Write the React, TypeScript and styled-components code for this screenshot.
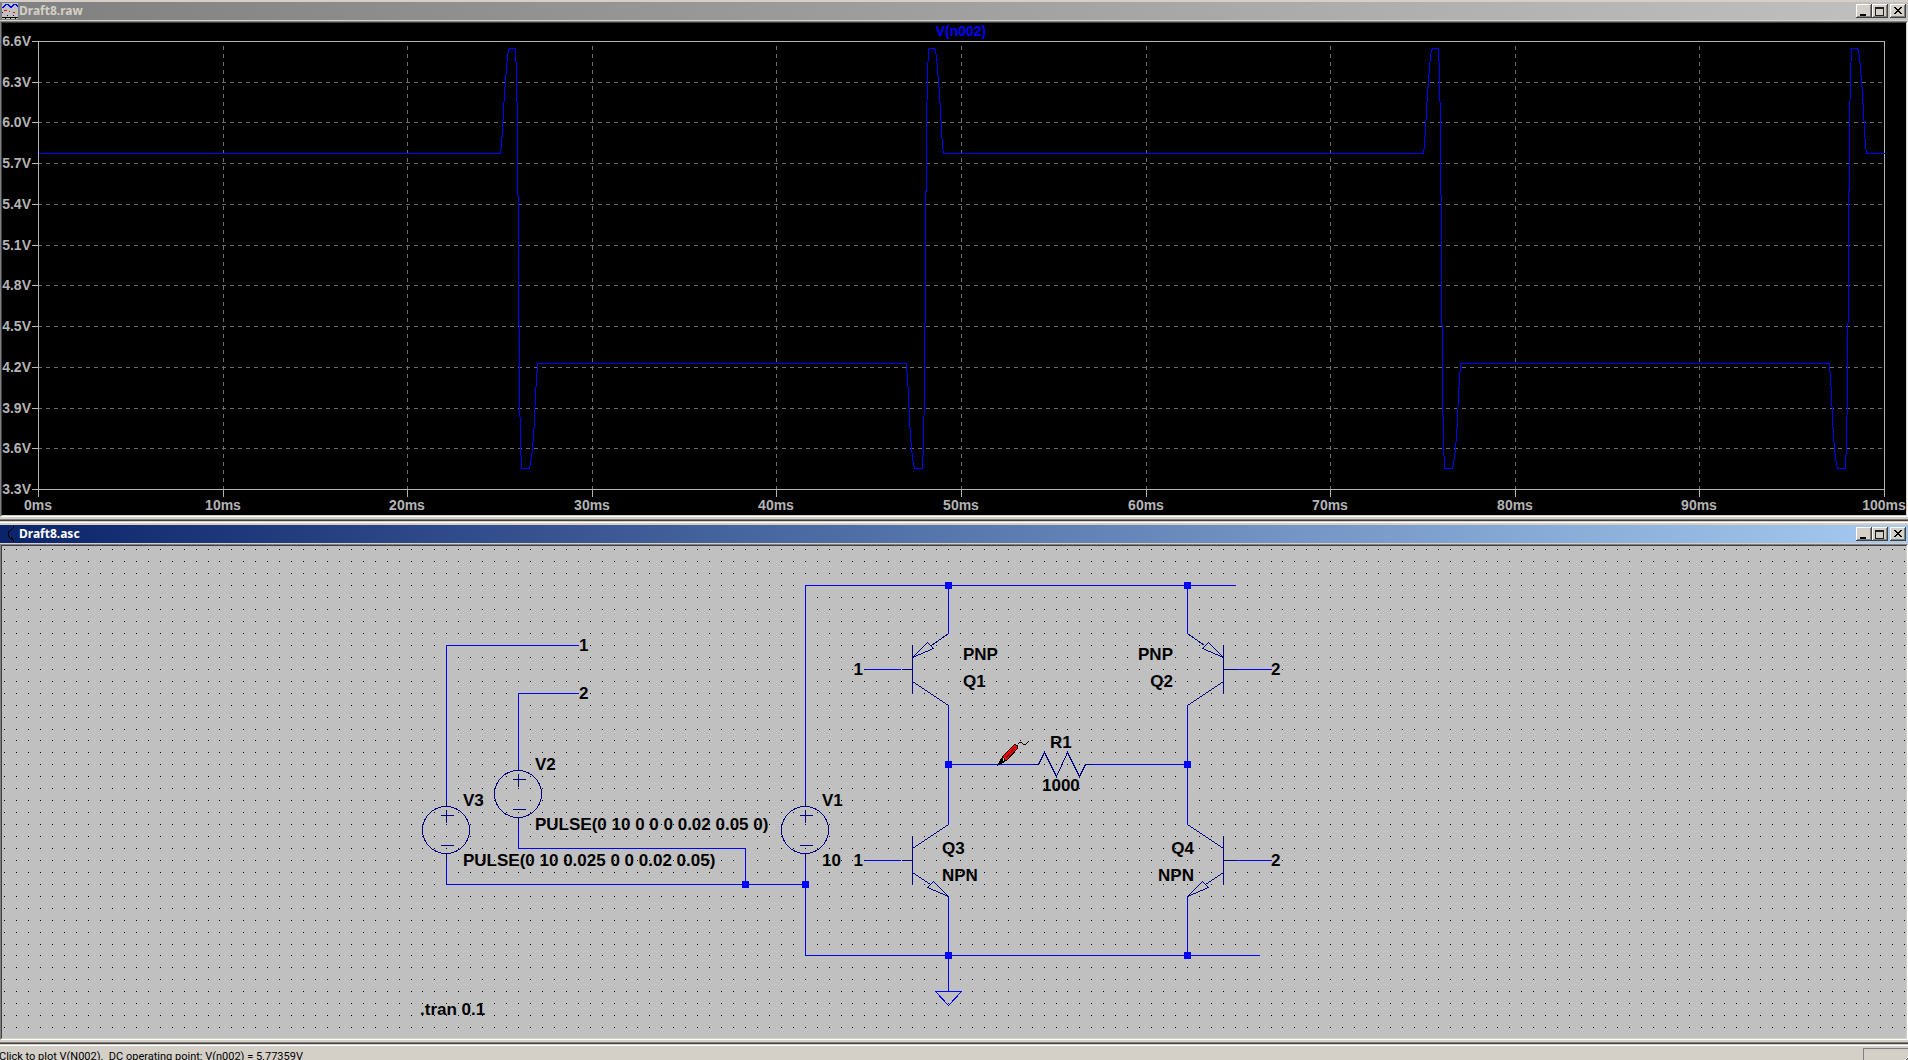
import React, { useLayoutEffect, useMemo, useRef, useState } from "react";
import styled, { createGlobalStyle } from "styled-components";

const face = "#d4d0c8";
const navy = "#000080";
const wireBlue = "#0000ff";
const uiFont = '"Noto Sans", "Open Sans", sans-serif';
const statusFont = 'Roboto, "Noto Sans", sans-serif';
const plotFont = '"Liberation Sans", Arial, sans-serif';

const GlobalStyle = createGlobalStyle`
  html, body { margin: 0; padding: 0; height: 100%; overflow: hidden; background: ${face}; }
  #root { height: 100%; }
  * { box-sizing: border-box; }
`;

const Workspace = styled.div`
  display: flex;
  flex-direction: column;
  height: 100vh;
  overflow: hidden;
  background: ${face};
`;

const Mdi = styled.main`
  display: flex;
  flex: 1;
  flex-direction: column;
  min-height: 0;
  margin-top: -2px;
`;

const Frame = styled.section`
  display: flex;
  flex: 1 1 0;
  flex-direction: column;
  min-height: 0;
  padding: 4px 0;
  background: ${face};
  box-shadow:
    inset 0 1px 0 ${face},
    inset 0 2px 0 #fff,
    inset 0 -1px 0 #404040,
    inset 0 -2px 0 #808080;
`;

const TitleBar = styled.header<{ $active: boolean }>`
  display: flex;
  flex: none;
  align-items: center;
  height: 18px;
  margin-bottom: 1px;
  padding: 0 2px;
  background: ${(p) =>
    p.$active
      ? "linear-gradient(to right, #0a246a, #a6caf0)"
      : "linear-gradient(to right, #808080, #c0c0c0)"};
  color: ${(p) => (p.$active ? "#fff" : face)};
`;

const Title = styled.h1`
  flex: 1;
  margin: 0;
  padding-left: 1px;
  font: bold 12px/18px ${uiFont};
`;

const CaptionButton = styled.button<{ $gap?: boolean }>`
  display: block;
  width: 16px;
  height: 14px;
  margin: 0 0 0 ${(p) => (p.$gap ? "2px" : "0")};
  padding: 0;
  border: 0;
  background: ${face};
  box-shadow:
    inset -1px -1px 0 #404040,
    inset 1px 1px 0 #fff,
    inset -2px -2px 0 #808080;

  svg {
    display: block;
  }
`;

const Client = styled.div<{ $color: string }>`
  flex: 1;
  min-height: 0;
  overflow: hidden;
  border: 1px solid;
  border-color: #808080 #fff #fff #808080;
  background: ${(p) => p.$color};

  > div {
    height: 100%;
    border: 1px solid;
    border-color: #404040 ${face} ${face} #404040;
  }
`;

const Drawing = styled.svg`
  display: block;
  width: 100%;
  height: 100%;
`;

const PlotText = styled.text<{ $trace?: boolean }>`
  fill: ${(p) => (p.$trace ? wireBlue : "#b4b4b4")};
  font: bold 14px ${plotFont};
`;

const SchematicText = styled.text`
  fill: #000;
  font: bold 17px ${plotFont};
`;

const StatusBar = styled.footer`
  display: flex;
  flex: none;
  justify-content: space-between;
  height: 16px;
  margin-left: -1px;
  overflow: hidden;
  background: ${face};
  box-shadow: inset 0 1px 0 ${face}, inset 0 2px 0 #fff;
`;

const StatusText = styled.p`
  margin: 0;
  padding-top: 6px;
  color: #000;
  font: 11px/14px ${statusFont};
  white-space: pre;
`;

const StatusCell = styled.div`
  width: 45px;
  height: 20px;
  margin-top: 4px;
  border-top: 1px solid #808080;
  border-left: 1px solid #808080;

  svg {
    display: block;
    margin-left: auto;
  }
`;

function useSize() {
  const ref = useRef<HTMLDivElement>(null);
  const [size, setSize] = useState({ width: 0, height: 0 });
  useLayoutEffect(() => {
    const el = ref.current;
    if (!el) return;
    const read = () => setSize({ width: el.clientWidth, height: el.clientHeight });
    read();
    const observer = new ResizeObserver(read);
    observer.observe(el);
    return () => observer.disconnect();
  }, []);
  return { ref, ...size };
}

function WaveformIcon() {
  return (
    <svg width="16" height="16" viewBox="0 0 16 16" shapeRendering="crispEdges" aria-hidden>
      <rect width="16" height="16" fill="#c0c0c0" />
      <path d="M0 4h1v-1h1v-1h1v-1h3v1h1v1h1v1h1v-1h1v-1h1v-1h3v1h1v1h1" fill="none" stroke="#0000ff" transform="translate(0 .5)" />
      <path d="M2 7.500h3M7 8.500h1M11 9.500h2" stroke="#ff0000" />
      <path d="M0 9.500h1M5 12.500h1M11 12.500h1" stroke={navy} />
      <path d="M0 14.500h16M3 15.500h1M8 15.500h1M13 15.500h1" stroke="#000" />
    </svg>
  );
}

function SchematicIcon() {
  return (
    <svg width="16" height="16" viewBox="0 0 16 16" shapeRendering="crispEdges" aria-hidden>
      <path d="M11.500 0v2M10.500 2v1M9.500 3v1M8.500 4v1M7.500 5v1M6.500 5v6M7.500 10v2M8.500 12v1M9.500 11v2M10.500 12v2M11.500 13v3" stroke="#000" />
    </svg>
  );
}

function CaptionButtons() {
  return (
    <>
      <CaptionButton aria-label="Minimize">
        <svg width="16" height="14" shapeRendering="crispEdges" aria-hidden>
          <rect x="4" y="10" width="6" height="2" />
        </svg>
      </CaptionButton>
      <CaptionButton aria-label="Maximize">
        <svg width="16" height="14" shapeRendering="crispEdges" aria-hidden>
          <path d="M3 3h9v9H3z M4 5v6h7V5z" fillRule="evenodd" fill="#202020" />
        </svg>
      </CaptionButton>
      <CaptionButton aria-label="Close" $gap>
        <svg width="16" height="14" shapeRendering="crispEdges" aria-hidden>
          <path d="M4 3h2v1h1v1h2v-1h1v-1h2v1h-1v1h-1v1h-1v1h1v1h1v1h1v1h-2v-1h-1v-1h-2v1h-1v1h-2v-1h1v-1h1v-1h1v-1h-1v-1h-1v-1h-1z" />
        </svg>
      </CaptionButton>
    </>
  );
}

function ChildWindow(props: {
  title: string;
  active: boolean;
  icon: React.ReactNode;
  color: string;
  children: React.ReactNode;
}) {
  return (
    <Frame aria-label={props.title}>
      <TitleBar $active={props.active}>
        {props.icon}
        <Title>{props.title}</Title>
        <CaptionButtons />
      </TitleBar>
      <Client $color={props.color}>{props.children}</Client>
    </Frame>
  );
}

/* Samples of V(n002) on a grid of 1846 x 448 steps: 100 ms wide, 6.6 V down to 3.3 V. */
const GRID_W = 1846;
const GRID_H = 448;

const risingEdge: [number, number][] = [
  [868, 322], [869, 339], [870, 352], [871, 379], [872, 394], [873, 407],
  [874, 416], [875, 422], [876, 427], [884, 427], [885, 401], [886, 349],
  [887, 218], [888, 86], [889, 34], [890, 7], [896, 7], [897, 9], [898, 15],
  [899, 27], [900, 39], [901, 52], [902, 70], [903, 88], [904, 104], [905, 112],
];
const fallingEdge = risingEdge
  .map(([x, y]): [number, number] => [1367 - x, y])
  .reverse();
const period = (shift: number) =>
  [...fallingEdge, ...risingEdge].map(([x, y]): [number, number] => [x + shift, y]);
const samples: [number, number][] = [[0, 112], ...period(0), ...period(923), [GRID_W, 112]];

const voltTicks = ["6.6V", "6.3V", "6.0V", "5.7V", "5.4V", "5.1V", "4.8V", "4.5V", "4.2V", "3.9V", "3.6V", "3.3V"];
const timeTicks = ["0ms", "10ms", "20ms", "30ms", "40ms", "50ms", "60ms", "70ms", "80ms", "90ms", "100ms"];

function WaveformPlot() {
  const { ref, width, height } = useSize();
  const left = 36;
  const top = 18;
  const right = width - 22;
  const bottom = height - 26;
  const w = right - left;
  const h = bottom - top;
  const tx = (i: number) => left + Math.round((i * w) / 10);
  const ty = (i: number) => top + Math.round((i * h) / 11);
  const trace = samples
    .map(([x, y]) => `${Math.round(left + (x * w) / GRID_W)},${Math.round(top + (y * h) / GRID_H)}`)
    .join(" ");

  return (
    <div ref={ref}>
      {width > 0 && (
        <Drawing role="img" aria-label="V(n002) against time">
          <g transform="translate(.5 .5)" shapeRendering="crispEdges" fill="none">
            <g stroke="#6e6e6e" strokeDasharray="4 4">
              {voltTicks.slice(1, -1).map((v, i) => (
                <line key={v} x1={left - 0.5} x2={right} y1={ty(i + 1)} y2={ty(i + 1)} />
              ))}
              {timeTicks.slice(1, -1).map((t, i) => (
                <line key={t} x1={tx(i + 1)} x2={tx(i + 1)} y1={top + 4.5} y2={bottom} />
              ))}
            </g>
            <g stroke="#b4b4b4">
              <rect x={left} y={top} width={w} height={h} />
              {voltTicks.map((v, i) => (
                <line key={v} x1={left - 7} x2={left} y1={ty(i)} y2={ty(i)} />
              ))}
              {timeTicks.map((t, i) => (
                <line key={t} x1={tx(i)} x2={tx(i)} y1={bottom} y2={bottom + 7} />
              ))}
            </g>
            <polyline points={trace} stroke={wireBlue} />
          </g>
          <PlotText $trace x={left + w / 2} y={top - 5} textAnchor="middle">V(n002)</PlotText>
          {voltTicks.map((v, i) => (
            <PlotText key={v} x={left - 7} y={ty(i) + 5} textAnchor="end">{v}</PlotText>
          ))}
          {timeTicks.map((t, i) => (
            <PlotText key={t} x={tx(i)} y={bottom + 21} textAnchor="middle">{t}</PlotText>
          ))}
        </Drawing>
      )}
    </div>
  );
}

/* Schematic grid: column and row numbers to pixels at the current zoom. */
const PITCH = 11.944;
const gx = (k: number) => Math.floor(14.9 + k * PITCH);
const gy = (k: number) => Math.floor(3.85 + k * PITCH);

type Run = [number, number][];

const wires: Run[] = [
  [[36, 21], [36, 8], [47, 8]],
  [[42, 18], [42, 12], [47, 12]],
  [[42, 23], [42, 25], [61, 25], [61, 28]],
  [[36, 26], [36, 28], [66, 28]],
  [[66, 21], [66, 3], [102, 3]],
  [[66, 26], [66, 34], [104, 34]],
  [[78, 3], [78, 7]],
  [[98, 3], [98, 7]],
  [[78, 13], [78, 23]],
  [[98, 13], [98, 23]],
  [[78, 29], [78, 37]],
  [[98, 29], [98, 34]],
  [[78, 18], [85, 18]],
  [[90, 18], [98, 18]],
  [[71, 10], [74, 10]],
  [[71, 26], [74, 26]],
  [[102, 10], [105, 10]],
  [[102, 26], [105, 26]],
];

const junctions: Run = [[78, 3], [98, 3], [78, 18], [98, 18], [61, 28], [66, 28], [78, 34], [98, 34]];

function Wire({ run }: { run: Run }) {
  return <polyline points={run.map(([x, y]) => `${gx(x)},${gy(y)}`).join(" ")} />;
}

function VoltageSource({ col, row }: { col: number; row: number }) {
  const x = gx(col);
  const cy = gy(row) + 30;
  return (
    <g>
      <circle cx={x - 0.5} cy={cy - 0.5} r="23.5" />
      <path
        d={`M${x} ${gy(row)}V${cy - 24}M${x} ${cy + 23}V${cy + 30}M${x - 6} ${cy - 15}h13M${x} ${cy - 21}v13M${x - 6} ${cy + 15}h13`}
      />
    </g>
  );
}

/* Base bar at (col, row); dir points from the bar towards collector and emitter. */
function Transistor({ col, row, dir, pnp }: { col: number; row: number; dir: 1 | -1; pnp?: boolean }) {
  const x = gx(col);
  const far = x + dir * 36;
  const up = gy(row + 1);
  const low = gy(row + 3);
  const top = gy(row - 1);
  const end = gy(row + 5);
  const arrow = pnp
    ? `M${far} ${top}L${x + dir * 19} ${up - 12}M${x} ${up}L${x + dir * 15} ${up - 15}L${x + dir * 21} ${up - 9}ZM${x} ${low}L${far} ${end}`
    : `M${far} ${top}L${x} ${up}M${x} ${low}L${x + dir * 18} ${end - 12}M${far} ${end}L${far - dir * 15} ${end - 15}L${far - dir * 21} ${end - 9}Z`;
  return (
    <path d={`M${x} ${gy(row)}V${gy(row + 4)}M${x - dir * 11} ${gy(row + 2)}H${x}${arrow}`} />
  );
}

function Probe({ x, y }: { x: number; y: number }) {
  return (
    <g transform={`translate(${x} ${y})`}>
      <path d="M0 0L3 -6L6 -3Z" fill="#000" stroke="#000" />
      <path d="M4 -8L14 -18L16 -20L19 -19L19 -16L8 -4L5 -4Z" fill="#ff0000" stroke="#000" />
      <path d="M7 -6L16 -17" stroke="#800000" />
      <path d="M3 -6L5 -7L7 -4L5 -3Z" fill="#c0c0c0" stroke="#000" />
      <path d="M19 -20L21 -22L23 -22L25 -20L27 -20L30 -23" fill="none" stroke="#000" />
    </g>
  );
}

const labels: { x: number; y: number; text: string; end?: boolean }[] = [
  { x: gx(47) + 1, y: gy(8) + 6, text: "1" },
  { x: gx(47) + 1, y: gy(12) + 6, text: "2" },
  { x: gx(71) - 1, y: gy(10) + 6, text: "1", end: true },
  { x: gx(71) - 1, y: gy(26) + 6, text: "1", end: true },
  { x: gx(105), y: gy(10) + 6, text: "2" },
  { x: gx(105), y: gy(26) + 6, text: "2" },
  { x: 533, y: 224, text: "V2" },
  { x: 461, y: 260, text: "V3" },
  { x: 820, y: 260, text: "V1" },
  { x: 820, y: 320, text: "10" },
  { x: 533, y: 284, text: "PULSE(0 10 0 0 0 0.02 0.05 0)" },
  { x: 461, y: 320, text: "PULSE(0 10 0.025 0 0 0.02 0.05)" },
  { x: 961, y: 114, text: "PNP" },
  { x: 961, y: 141, text: "Q1" },
  { x: 1171, y: 114, text: "PNP", end: true },
  { x: 1171, y: 141, text: "Q2", end: true },
  { x: 940, y: 308, text: "Q3" },
  { x: 940, y: 335, text: "NPN" },
  { x: 1192, y: 308, text: "Q4", end: true },
  { x: 1192, y: 335, text: "NPN", end: true },
  { x: 1048, y: 202, text: "R1" },
  { x: 1040, y: 245, text: "1000" },
  { x: 418, y: 469, text: ".tran 0.1" },
];

function Schematic() {
  const { ref, width, height } = useSize();
  const dots = useMemo(() => {
    let d = "";
    for (let r = 0; gy(r) < height; r++) {
      for (let c = -1; gx(c) < width; c++) d += `M${gx(c)} ${gy(r)}h1v1h-1z`;
    }
    return d;
  }, [width, height]);
  const y18 = gy(18);
  const r0 = gx(85);
  const gnd = gy(37);

  return (
    <div ref={ref}>
      <Drawing role="img" aria-label="Transistor bridge schematic">
        <path d={dots} fill="#000" shapeRendering="crispEdges" />
        <g transform="translate(.5 .5)" shapeRendering="crispEdges" fill="none">
          <g stroke={navy}>
            <VoltageSource col={36} row={21} />
            <VoltageSource col={42} row={18} />
            <VoltageSource col={66} row={21} />
            <Transistor col={75} row={8} dir={1} pnp />
            <Transistor col={101} row={8} dir={-1} pnp />
            <Transistor col={75} row={24} dir={1} />
            <Transistor col={101} row={24} dir={-1} />
            <path d={`M${r0} ${y18}h6l6 -12l12 24l11 -24l12 24l6 -12h6`} />
          </g>
          <g stroke={wireBlue}>
            {wires.map((run, i) => (
              <Wire key={i} run={run} />
            ))}
            <path d={`M${gx(78) - 13} ${gnd}h26l-13 14z`} />
          </g>
          <Probe x={996} y={y18} />
        </g>
        <g fill={wireBlue} shapeRendering="crispEdges">
          {junctions.map(([c, r]) => (
            <rect key={`${c}-${r}`} x={gx(c) - 3} y={gy(r) - 3} width="7" height="7" />
          ))}
        </g>
        {labels.map((l, i) => (
          <SchematicText key={i} x={l.x} y={l.y} textAnchor={l.end ? "end" : "start"}>
            {l.text}
          </SchematicText>
        ))}
      </Drawing>
    </div>
  );
}

export default function App() {
  return (
    <>
      <GlobalStyle />
      <Workspace>
        <Mdi>
          <ChildWindow title="Draft8.raw" active={false} icon={<WaveformIcon />} color="#000">
            <WaveformPlot />
          </ChildWindow>
          <ChildWindow title="Draft8.asc" active icon={<SchematicIcon />} color="#c0c0c0">
            <Schematic />
          </ChildWindow>
        </Mdi>
        <StatusBar>
          <StatusText>{"Click to plot V(N002).  DC operating point: V(n002) = 5.77359V"}</StatusText>
          <StatusCell>
            <svg width="12" height="20" shapeRendering="crispEdges" aria-hidden>
              <path d="M0 20L12 8" stroke="#fff" />
              <path d="M2 20L12 10" stroke="#808080" strokeWidth="2" />
            </svg>
          </StatusCell>
        </StatusBar>
      </Workspace>
    </>
  );
}
